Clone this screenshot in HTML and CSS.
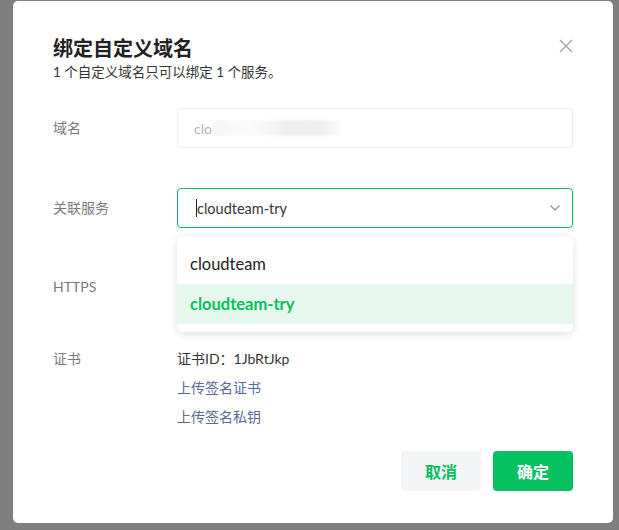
FILE: index.html
```html
<!DOCTYPE html>
<html lang="zh-CN">
<head>
<meta charset="utf-8">
<title>绑定自定义域名</title>
<link rel="stylesheet" href="styles.css">
</head>
<body>
<div class="dialog">
  <button class="close" aria-label="关闭">
    <svg width="14" height="14" viewBox="0 0 14 14"><path d="M1 1L13 13M13 1L1 13" stroke="#a3a3a3" stroke-width="1.4" fill="none"/></svg>
  </button>
  <div class="head">
    <h1 class="title">绑定自定义域名</h1>
    <p class="subtitle">1 个自定义域名只可以绑定 1 个服务。</p>
  </div>
  <div class="row row-domain">
    <div class="label">域名</div>
    <div class="value">
      <div class="input"><span class="ph">clo</span><span class="mask"></span></div>
    </div>
  </div>
  <div class="row row-service">
    <div class="label">关联服务</div>
    <div class="value">
      <div class="select">
        <span class="caret"></span><span class="sel-text">cloudteam-try</span>
        <svg class="chev" width="12" height="8" viewBox="0 0 12 8"><path d="M1.5 1.5L6 6L10.5 1.5" stroke="#a0a0a0" stroke-width="1.5" fill="none"/></svg>
      </div>
      <ul class="dropdown">
        <li class="opt">cloudteam</li>
        <li class="opt active">cloudteam-try</li>
      </ul>
    </div>
  </div>
  <div class="row row-https">
    <div class="label">HTTPS</div>
    <div class="value"></div>
  </div>
  <div class="row row-cert">
    <div class="label">证书</div>
    <div class="value">
      <div class="cert-id">证书ID：1JbRtJkp</div>
      <a class="link">上传签名证书</a>
      <a class="link">上传签名私钥</a>
    </div>
  </div>
  <div class="footer">
    <button class="btn btn-cancel">取消</button>
    <button class="btn btn-ok">确定</button>
  </div>
</div>
</body>
</html>
```
FILE: styles.css
```css
* { box-sizing: border-box; }
body {
  margin: 0;
  background: #7f7f7f;
  font-family: "Lato", "Noto Sans CJK SC", sans-serif;
  color: #353535;
  width: 619px;
  height: 530px;
  overflow: hidden;
}
.dialog {
  position: relative;
  margin: 1px 0 0 13px;
  width: 600px;
  background: #fff;
  border-radius: 5px;
  padding: 33px 40px 32px 40px;
}
.close {
  position: absolute;
  top: 38px;
  right: 40px;
  width: 14px;
  height: 14px;
  padding: 0;
  border: 0;
  background: none;
  display: flex;
}
.title {
  margin: 0;
  font-size: 20px;
  line-height: 28px;
  font-weight: 700;
  color: #222;
}
.subtitle {
  margin: 0;
  font-size: 13.5px;
  line-height: 20px;
  color: #353535;
}
.row {
  display: flex;
}
.label {
  width: 124px;
  flex: none;
  font-size: 14px;
  color: #7a7a7a;
  line-height: 40px;
}
.value {
  flex: 1;
  position: relative;
}
.row-domain { margin-top: 26px; }
.row-service { margin-top: 40px; }
.row-https { margin-top: 39px; height: 40px; }
.row-cert { margin-top: 42px; }
.row-cert .label { line-height: 20px; }

.input {
  height: 40px;
  border: 1px solid #ececec;
  border-radius: 4px;
  display: flex;
  align-items: center;
  padding-left: 16px;
  font-size: 14px;
}
.ph { color: #b5b5b5; }
.mask {
  display: block;
  width: 130px;
  height: 16px;
  border-radius: 8px;
  background: linear-gradient(90deg, #f6f6f6 0%, #fafafa 30%, #efefef 60%, #f0f0f0 85%, #fbfbfb 100%);
  filter: blur(1px);
}
.select {
  height: 40px;
  border: 1px solid #07c160;
  border-radius: 4px;
  display: flex;
  align-items: center;
  padding-left: 18px;
  font-size: 14.5px;
  color: #353535;
}
.caret {
  width: 1px;
  height: 18px;
  background: #222;
}
.sel-text { flex: 1; }
.chev { margin-right: 11px; }
.dropdown {
  position: absolute;
  top: 48px;
  left: 0;
  right: 0;
  margin: 0;
  padding: 8px 0;
  list-style: none;
  background: #fff;
  border-radius: 6px;
  box-shadow: 0 2px 10px rgba(0, 0, 0, 0.13);
  z-index: 2;
}
.opt {
  height: 40px;
  line-height: 40px;
  padding-left: 13px;
  font-size: 16.5px;
  color: #222;
}
.opt.active {
  background: #e6f7ed;
  color: #07c160;
  font-weight: 700;
}
.cert-id {
  font-size: 14px;
  line-height: 20px;
  color: #353535;
}
.link {
  display: block;
  margin-top: 9px;
  font-size: 14px;
  line-height: 20px;
  color: #576b95;
}
.footer {
  margin-top: 24px;
  display: flex;
  justify-content: flex-end;
  gap: 12px;
}
.btn {
  width: 80px;
  height: 40px;
  border: 0;
  border-radius: 4px;
  font-family: inherit;
  font-size: 16px;
  font-weight: 700;
}
.btn-cancel { background: #f4f5f7; color: #07c160; }
.btn-ok { background: #07c160; color: #fff; }
```
